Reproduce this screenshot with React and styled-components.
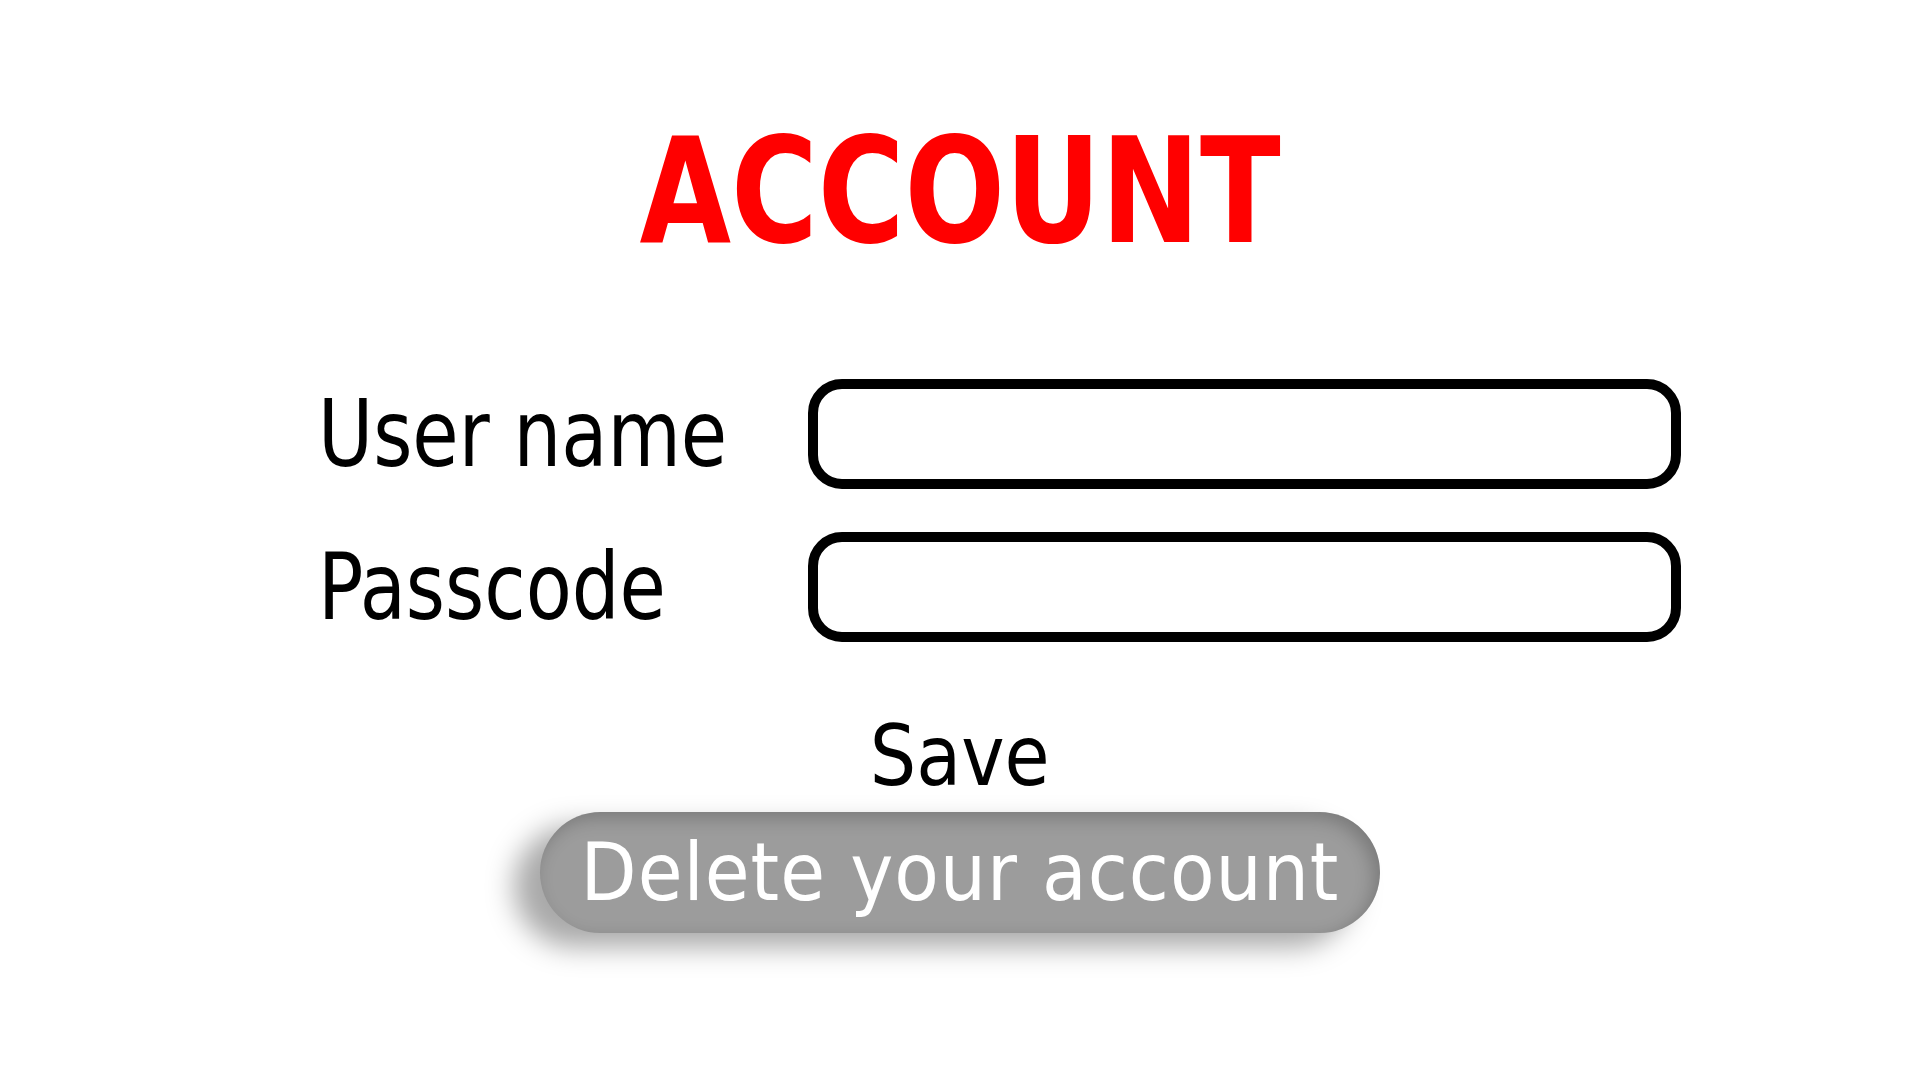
import styled, { createGlobalStyle } from "styled-components";

const GlobalStyle = createGlobalStyle`
    html,
    body {
        margin: 0;
        padding: 0;
        background: #ffffff;
    }
    body {
        font-family: "DejaVu Sans Condensed", "DejaVu Sans", sans-serif;
    }
`;

const Page = styled.div`
    width: 1920px;
    height: 1080px;
    display: flex;
    flex-direction: column;
    align-items: center;
    overflow: hidden;
`;

// the reference face is narrower than DejaVu, so squeeze it a bit
const Title = styled.h1`
    margin: 118px 0 0;
    font-size: 146px;
    line-height: 1;
    font-weight: 700;
    color: #ff0000;
    transform: scaleX(0.9);
`;

const Form = styled.form`
    align-self: stretch;
    display: grid;
    grid-template-columns: 490px 873px;
    row-gap: 43px;
    align-items: center;
    padding-left: 318px;
    margin-top: 115px;
`;

const Label = styled.label`
    font-size: 93px;
    line-height: 1;
    color: #000000;
    white-space: nowrap;
    transform: scaleX(0.9);
    transform-origin: left center;
`;

const Field = styled.input`
    box-sizing: border-box;
    width: 100%;
    height: 110px;
    border: 10px solid #000000;
    border-radius: 34px;
    background: #ffffff;
    outline: none;
    font-size: 48px;
    padding: 0 24px;
`;

const SaveButton = styled.button`
    margin-top: 72px;
    border: none;
    background: none;
    padding: 0;
    font-family: inherit;
    font-size: 84px;
    line-height: 1;
    color: #000000;
    transform: scaleX(0.97);
    cursor: pointer;
`;

const DeleteButton = styled.button`
    margin-top: 14px;
    width: 840px;
    height: 121px;
    border: none;
    border-radius: 61px;
    background: #9c9c9c;
    color: #ffffff;
    font-family: inherit;
    font-size: 81px;
    line-height: 1;
    letter-spacing: 1px;
    white-space: nowrap;
    padding: 0;
    box-shadow: inset -6px 6px 18px rgba(0, 0, 0, 0.22),
        -26px 14px 28px rgba(0, 0, 0, 0.34);
    cursor: pointer;
`;

const App = () => {
    return (
        <>
            <GlobalStyle />
            <Page>
                <Title>ACCOUNT</Title>
                <Form onSubmit={(e) => e.preventDefault()}>
                    <Label htmlFor="username">User name</Label>
                    <Field id="username" type="text" />
                    <Label htmlFor="passcode">Passcode</Label>
                    <Field id="passcode" type="password" />
                </Form>
                <SaveButton type="button">Save</SaveButton>
                <DeleteButton type="button">Delete your account</DeleteButton>
            </Page>
        </>
    );
};

export default App;
